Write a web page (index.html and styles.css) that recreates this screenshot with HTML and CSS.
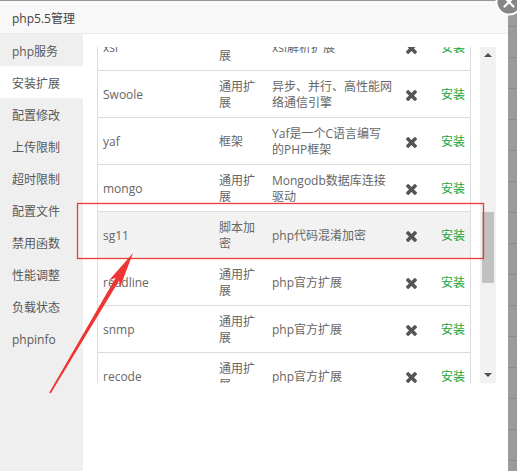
FILE: index.html
```html
<!DOCTYPE html>
<html lang="zh-CN">
<head>
<meta charset="utf-8">
<title>php5.5管理</title>
<link rel="stylesheet" href="styles.css">
</head>
<body>
<div class="page">
  <div class="dialog">
    <div class="title">php5.5管理</div>
    <div class="layout">
      <ul class="side">
        <li>php服务</li>
        <li class="on">安装扩展</li>
        <li>配置修改</li>
        <li>上传限制</li>
        <li>超时限制</li>
        <li>配置文件</li>
        <li>禁用函数</li>
        <li>性能调整</li>
        <li>负载状态</li>
        <li>phpinfo</li>
      </ul>
      <div class="main">
        <div class="tablebox">
          <table class="ext">
            <colgroup>
              <col class="c-name"><col class="c-type"><col class="c-desc"><col class="c-del"><col class="c-opt">
            </colgroup>
            <tbody>
              <tr><td>xsl</td><td>通用扩展</td><td>xsl解析扩展</td><td><svg class="x" viewBox="110 366 1188 1188"><path d="M1298 1322q0 40-28 68l-136 136q-28 28-68 28t-68-28l-294-294-294 294q-28 28-68 28t-68-28l-136-136q-28-28-28-68t28-68l294-294-294-294q-28-28-28-68t28-68l136-136q28-28 68-28t68 28l294 294 294-294q28-28 68-28t68 28l136 136q28 28 28 68t-28 68l-294 294 294 294q28 28 28 68z"/></svg></td><td><a class="inst">安装</a></td></tr>
              <tr><td>Swoole</td><td>通用扩展</td><td>异步、并行、高性能网络通信引擎</td><td><svg class="x" viewBox="110 366 1188 1188"><path d="M1298 1322q0 40-28 68l-136 136q-28 28-68 28t-68-28l-294-294-294 294q-28 28-68 28t-68-28l-136-136q-28-28-28-68t28-68l294-294-294-294q-28-28-28-68t28-68l136-136q28-28 68-28t68 28l294 294 294-294q28-28 68-28t68 28l136 136q28 28 28 68t-28 68l-294 294 294 294q28 28 28 68z"/></svg></td><td><a class="inst">安装</a></td></tr>
              <tr><td>yaf</td><td>框架</td><td>Yaf是一个C语言编写的PHP框架</td><td><svg class="x" viewBox="110 366 1188 1188"><path d="M1298 1322q0 40-28 68l-136 136q-28 28-68 28t-68-28l-294-294-294 294q-28 28-68 28t-68-28l-136-136q-28-28-28-68t28-68l294-294-294-294q-28-28-28-68t28-68l136-136q28-28 68-28t68 28l294 294 294-294q28-28 68-28t68 28l136 136q28 28 28 68t-28 68l-294 294 294 294q28 28 28 68z"/></svg></td><td><a class="inst">安装</a></td></tr>
              <tr><td>mongo</td><td>通用扩展</td><td>Mongodb数据库连接驱动</td><td><svg class="x" viewBox="110 366 1188 1188"><path d="M1298 1322q0 40-28 68l-136 136q-28 28-68 28t-68-28l-294-294-294 294q-28 28-68 28t-68-28l-136-136q-28-28-28-68t28-68l294-294-294-294q-28-28-28-68t28-68l136-136q28-28 68-28t68 28l294 294 294-294q28-28 68-28t68 28l136 136q28 28 28 68t-28 68l-294 294 294 294q28 28 28 68z"/></svg></td><td><a class="inst">安装</a></td></tr>
              <tr class="hover"><td>sg11</td><td>脚本加密</td><td>php代码混淆加密</td><td><svg class="x" viewBox="110 366 1188 1188"><path d="M1298 1322q0 40-28 68l-136 136q-28 28-68 28t-68-28l-294-294-294 294q-28 28-68 28t-68-28l-136-136q-28-28-28-68t28-68l294-294-294-294q-28-28-28-68t28-68l136-136q28-28 68-28t68 28l294 294 294-294q28-28 68-28t68 28l136 136q28 28 28 68t-28 68l-294 294 294 294q28 28 28 68z"/></svg></td><td><a class="inst">安装</a></td></tr>
              <tr><td>readline</td><td>通用扩展</td><td>php官方扩展</td><td><svg class="x" viewBox="110 366 1188 1188"><path d="M1298 1322q0 40-28 68l-136 136q-28 28-68 28t-68-28l-294-294-294 294q-28 28-68 28t-68-28l-136-136q-28-28-28-68t28-68l294-294-294-294q-28-28-28-68t28-68l136-136q28-28 68-28t68 28l294 294 294-294q28-28 68-28t68 28l136 136q28 28 28 68t-28 68l-294 294 294 294q28 28 28 68z"/></svg></td><td><a class="inst">安装</a></td></tr>
              <tr><td>snmp</td><td>通用扩展</td><td>php官方扩展</td><td><svg class="x" viewBox="110 366 1188 1188"><path d="M1298 1322q0 40-28 68l-136 136q-28 28-68 28t-68-28l-294-294-294 294q-28 28-68 28t-68-28l-136-136q-28-28-28-68t28-68l294-294-294-294q-28-28-28-68t28-68l136-136q28-28 68-28t68 28l294 294 294-294q28-28 68-28t68 28l136 136q28 28 28 68t-28 68l-294 294 294 294q28 28 28 68z"/></svg></td><td><a class="inst">安装</a></td></tr>
              <tr><td>recode</td><td>通用扩展</td><td>php官方扩展</td><td><svg class="x" viewBox="110 366 1188 1188"><path d="M1298 1322q0 40-28 68l-136 136q-28 28-68 28t-68-28l-294-294-294 294q-28 28-68 28t-68-28l-136-136q-28-28-28-68t28-68l294-294-294-294q-28-28-28-68t28-68l136-136q28-28 68-28t68 28l294 294 294-294q28-28 68-28t68 28l136 136q28 28 28 68t-28 68l-294 294 294 294q28 28 28 68z"/></svg></td><td><a class="inst">安装</a></td></tr>
              <tr><td>imap</td><td>通用扩展</td><td>邮件服务扩展</td><td><svg class="x" viewBox="110 366 1188 1188"><path d="M1298 1322q0 40-28 68l-136 136q-28 28-68 28t-68-28l-294-294-294 294q-28 28-68 28t-68-28l-136-136q-28-28-28-68t28-68l294-294-294-294q-28-28-28-68t28-68l136-136q28-28 68-28t68 28l294 294 294-294q28-28 68-28t68 28l136 136q28 28 28 68t-28 68l-294 294 294 294q28 28 28 68z"/></svg></td><td><a class="inst">安装</a></td></tr>
            </tbody>
          </table>
        </div>
        <div class="scrollbar">
          <div class="sb-btn"><span class="tri-up"></span></div>
          <div class="sb-track"><div class="sb-thumb"></div></div>
          <div class="sb-btn"><span class="tri-down"></span></div>
        </div>
      </div>
    </div>
  </div>
  <div class="backdrop"></div>
</div>
<div class="close"><svg viewBox="0 0 28 28" width="28" height="28"><circle cx="14" cy="14" r="12.5" fill="#858585" stroke="#fff" stroke-width="2"/><path d="M9.5 9.5L18.5 18.5M18.5 9.5L9.5 18.5" stroke="#fff" stroke-width="2.2" stroke-linecap="round"/></svg></div>
<svg class="mark" viewBox="0 0 517 471" width="517" height="471">
  <rect x="77.5" y="203.5" width="406" height="55" fill="none" stroke="#ec3b3b" stroke-width="1.3"/>
  <polygon points="49.3,392.5 115.7,277.7 108.9,280.6 133,253 120.1,287.2 119.5,279.9 50.7,393.5" fill="#ef3434"/>
</svg>
</body>
</html>
```

FILE: styles.css
```css
html, body {
  margin: 0;
  padding: 0;
}
body {
  width: 517px;
  height: 471px;
  overflow: hidden;
  background: #979797;
  font-family: "Open Sans", "Noto Sans CJK SC", sans-serif;
  font-size: 12px;
  position: relative;
}
.page {
  display: flex;
  height: 471px;
}
.dialog {
  width: 508px;
  margin-top: 1px;
  background: #fff;
  display: flex;
  flex-direction: column;
}
.backdrop {
  flex: 1;
  background: repeating-linear-gradient(to bottom, #9b9b9b 0 26px, #8c8c8c 26px 27px, #9b9b9b 27px 31px);
}
.title {
  height: 32px;
  line-height: 35px;
  padding-left: 12px;
  background: #f8f8f8;
  border-bottom: 1px solid #ececec;
  color: #444;
  overflow: hidden;
}
.layout {
  flex: 1;
  display: flex;
}
.side {
  list-style: none;
  margin: 0;
  padding: 0;
  width: 83px;
  background: #efefef;
}
.side li {
  height: 32px;
  line-height: 36px;
  padding-left: 12px;
  color: #595959;
  overflow: hidden;
}
.side li.on {
  background: #fff;
}
.main {
  flex: 1;
  display: flex;
  align-items: flex-start;
  gap: 9px;
  padding: 13px 12px 0 14px;
}
.tablebox {
  width: 374px;
  height: 336px;
  overflow: hidden;
}
.ext {
  width: 374px;
  margin-top: -23px;
  table-layout: fixed;
  border-collapse: separate;
  border-spacing: 0;
  border-left: 1px solid #ddd;
  border-right: 1px solid #ddd;
  color: #666;
}
.c-name { width: 115px; }
.c-type { width: 53px; }
.c-desc { width: 132px; }
.c-del { width: 37px; }
.c-opt { width: 35px; }
.ext td {
  padding: 8px 6px 6px;
  line-height: 16px;
  border-bottom: 1px solid #ddd;
  vertical-align: middle;
}
.ext td:first-child {
  padding-left: 5px;
}
.ext td:nth-child(4) {
  padding-left: 8px;
  padding-right: 0;
}
.ext td:last-child {
  padding-left: 6px;
  padding-right: 0;
  white-space: nowrap;
}
.ext tr.hover td {
  background: #f2f2f2;
}
.x {
  display: block;
  width: 11px;
  height: 11px;
  fill: #555;
}
.inst {
  color: #20a53a;
  text-decoration: none;
}
.scrollbar {
  width: 16px;
  height: 336px;
  background: #f1f1f1;
  display: flex;
  flex-direction: column;
}
.sb-btn {
  height: 16px;
  display: flex;
  align-items: center;
  justify-content: center;
}
.tri-up {
  width: 0;
  height: 0;
  border-left: 4px solid transparent;
  border-right: 4px solid transparent;
  border-bottom: 4px solid #505050;
}
.tri-down {
  width: 0;
  height: 0;
  border-left: 4px solid transparent;
  border-right: 4px solid transparent;
  border-top: 4px solid #505050;
}
.sb-track {
  flex: 1;
  padding: 0 2px;
}
.sb-thumb {
  margin-top: 149px;
  height: 71px;
  background: #c1c1c1;
}
.close {
  position: absolute;
  left: 495px;
  top: -12px;
  width: 28px;
  height: 28px;
}
.close svg {
  display: block;
}
.mark {
  position: absolute;
  left: 0;
  top: 0;
  pointer-events: none;
}
```
